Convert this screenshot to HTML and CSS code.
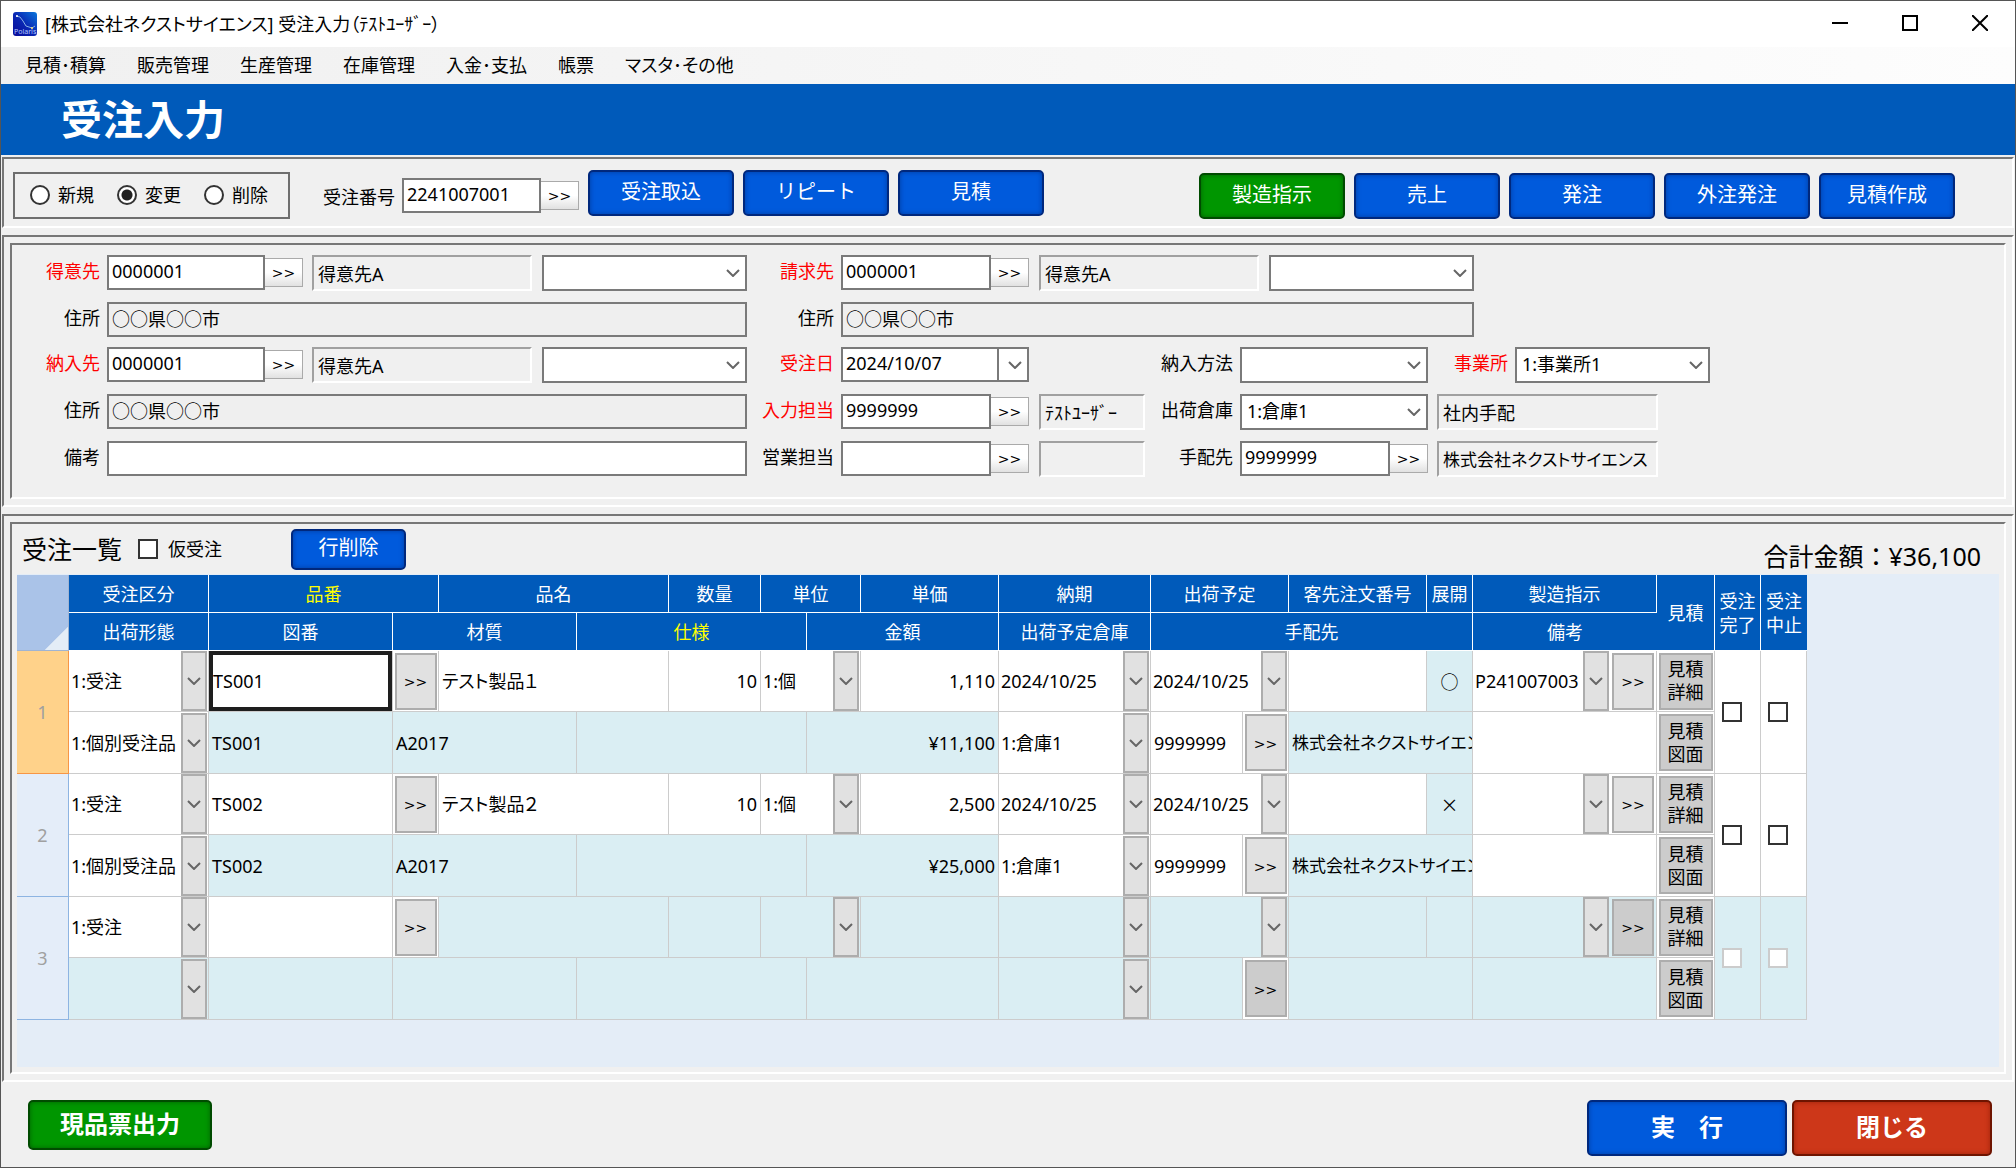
FILE: index.html
```html
<!DOCTYPE html>
<html lang="ja">
<head>
  <meta charset="UTF-8">
  <title>受注入力</title>
  <link rel="stylesheet" href="styles.css">
</head>
<body>
<div class="window">
  <header class="titlebar">
    <svg class="app-icon" viewBox="0 0 24 24">
      <defs>
        <linearGradient id="sky" x1="0" y1="1" x2="1" y2="0">
          <stop offset="0" stop-color="#0a0a96"/>
          <stop offset="0.5" stop-color="#0a28b4"/>
          <stop offset="1" stop-color="#0a78dc"/>
        </linearGradient>
      </defs>
      <rect width="24" height="24" rx="3" fill="url(#sky)"/>
      <path d="M3 4l4 1 3 4 3 5 6 2 3-2" fill="none" stroke="#8ab4e6" stroke-width="1"/>
      <circle cx="4" cy="4" r="1" fill="#fff"/>
      <circle cx="19" cy="16" r="1" fill="#ffe678"/>
      <text x="1" y="22" font-size="7" fill="#b4c8ff">Polaris</text>
    </svg>
    <span class="caption">[株式会社ネクストサイエンス] 受注入力（ﾃｽﾄﾕｰｻﾞｰ）</span>
    <div class="win-buttons">
      <button type="button" aria-label="最小化"><svg viewBox="0 0 16 16"><path d="M0 8h16"/></svg></button>
      <button type="button" aria-label="最大化"><svg viewBox="0 0 16 16"><path d="M1 1h14v14H1z"/></svg></button>
      <button type="button" aria-label="閉じる"><svg viewBox="0 0 16 16"><path d="M0 0l16 16M16 0L0 16"/></svg></button>
    </div>
  </header>

  <nav class="menu">
    <a href="#">見積･積算</a>
    <a href="#">販売管理</a>
    <a href="#">生産管理</a>
    <a href="#">在庫管理</a>
    <a href="#">入金･支払</a>
    <a href="#">帳票</a>
    <a href="#">マスタ･その他</a>
  </nav>

  <h1>受注入力</h1>

  <section class="toolbar sunken">
    <div class="modes">
      <label><input type="radio" name="mode">新規</label>
      <label><input type="radio" name="mode" checked>変更</label>
      <label><input type="radio" name="mode">削除</label>
    </div>
    <label class="no-label" for="order-no">受注番号</label>
    <div class="lookup order-no">
      <input type="text" id="order-no" value="2241007001"><button type="button">&gt;&gt;</button>
    </div>
    <div class="tools">
      <button type="button" class="btn">受注取込</button>
      <button type="button" class="btn">リピート</button>
      <button type="button" class="btn">見積</button>
    </div>
    <div class="actions">
      <button type="button" class="btn green">製造指示</button>
      <button type="button" class="btn">売上</button>
      <button type="button" class="btn">発注</button>
      <button type="button" class="btn">外注発注</button>
      <button type="button" class="btn narrow">見積作成</button>
    </div>
  </section>

  <section class="panel sunken">
    <form class="fields sunken">
      <!-- 得意先 / 請求先 -->
      <label class="c1 req" for="customer">得意先</label>
      <div class="lookup c2"><input type="text" id="customer" value="0000001"><button type="button">&gt;&gt;</button></div>
      <output class="c3">得意先A</output>
      <select class="c4" aria-label="得意先担当"><option></option></select>
      <label class="c5 req" for="billing">請求先</label>
      <div class="lookup c6"><input type="text" id="billing" value="0000001"><button type="button">&gt;&gt;</button></div>
      <div class="pair">
        <output>得意先A</output>
        <select aria-label="請求先担当"><option></option></select>
      </div>

      <!-- 住所 -->
      <label class="c1" for="addr1">住所</label>
      <input class="wide" type="text" id="addr1" value="○○県○○市" readonly>
      <label class="c5" for="addr2">住所</label>
      <input class="wide2" type="text" id="addr2" value="○○県○○市" readonly>

      <!-- 納入先 / 受注日 -->
      <label class="c1 req" for="deliver">納入先</label>
      <div class="lookup c2"><input type="text" id="deliver" value="0000001"><button type="button">&gt;&gt;</button></div>
      <output class="c3">得意先A</output>
      <select class="c4" aria-label="納入先担当"><option></option></select>
      <label class="c5 req" for="order-date">受注日</label>
      <div class="date c6"><input type="text" id="order-date" value="2024/10/07"><button type="button" aria-label="日付"></button></div>
      <label class="c8" for="method">納入方法</label>
      <select class="c9" id="method"><option></option></select>
      <label class="c10 req" for="office">事業所</label>
      <select class="c11" id="office"><option>1:事業所1</option></select>

      <!-- 住所 / 入力担当 -->
      <label class="c1" for="addr3">住所</label>
      <input class="wide" type="text" id="addr3" value="○○県○○市" readonly>
      <label class="c5 req" for="operator">入力担当</label>
      <div class="lookup c6"><input type="text" id="operator" value="9999999"><button type="button">&gt;&gt;</button></div>
      <output class="c7">ﾃｽﾄﾕｰｻﾞｰ</output>
      <label class="c8" for="warehouse">出荷倉庫</label>
      <select class="c9" id="warehouse"><option>1:倉庫1</option></select>
      <output class="vendor">社内手配</output>

      <!-- 備考 / 営業担当 -->
      <label class="c1" for="note">備考</label>
      <input class="wide" type="text" id="note">
      <label class="c5" for="sales">営業担当</label>
      <div class="lookup c6"><input type="text" id="sales"><button type="button">&gt;&gt;</button></div>
      <output class="c7"></output>
      <label class="c8" for="supplier">手配先</label>
      <div class="lookup c9"><input type="text" id="supplier" value="9999999"><button type="button">&gt;&gt;</button></div>
      <output class="vendor long">株式会社ネクストサイエンス</output>
    </form>
  </section>

  <section class="panel list sunken">
    <div class="list-inner sunken">
      <div class="list-head">
        <h2>受注一覧</h2>
        <label><input type="checkbox">仮受注</label>
        <button type="button" class="btn del">行削除</button>
        <p class="total">合計金額：¥36,100</p>
      </div>

      <div class="sheet">
      <table>
        <colgroup>
          <col class="w52"><col class="w140"><col class="w184"><col class="w46"><col class="w138">
          <col class="w92"><col class="w92"><col class="w46"><col class="w54"><col class="w138">
          <col class="w152"><col class="w92"><col class="w46"><col class="w138"><col class="w46">
          <col class="w184"><col class="w58"><col class="w46"><col class="w46">
        </colgroup>
        <thead>
          <tr>
            <th rowspan="2" class="corner"></th>
            <th>受注区分</th>
            <th colspan="2" class="key">品番</th>
            <th colspan="2">品名</th>
            <th>数量</th>
            <th colspan="2">単位</th>
            <th>単価</th>
            <th>納期</th>
            <th colspan="2">出荷予定</th>
            <th>客先注文番号</th>
            <th>展開</th>
            <th>製造指示</th>
            <th rowspan="2">見積</th>
            <th rowspan="2">受注<br>完了</th>
            <th rowspan="2">受注<br>中止</th>
          </tr>
          <tr>
            <th>出荷形態</th>
            <th>図番</th>
            <th colspan="2">材質</th>
            <th colspan="3" class="key">仕様</th>
            <th colspan="2">金額</th>
            <th>出荷予定倉庫</th>
            <th colspan="4">手配先</th>
            <th>備考</th>
          </tr>
        </thead>
        <tbody class="current">
          <tr>
            <th rowspan="2">1</th>
            <td class="cell"><select aria-label="受注区分"><option>1:受注</option></select></td>
            <td class="cell"><input class="active" type="text" aria-label="品番" value="TS001"></td>
            <td class="cell"><button type="button">&gt;&gt;</button></td>
            <td colspan="2">テスト製品１</td>
            <td class="num">10</td>
            <td class="cell" colspan="2"><select aria-label="単位"><option>1:個</option></select></td>
            <td class="num">1,110</td>
            <td class="cell"><select aria-label="納期"><option>2024/10/25</option></select></td>
            <td class="cell" colspan="2"><select aria-label="出荷予定"><option>2024/10/25</option></select></td>
            <td></td>
            <td class="ro mark">○</td>
            <td class="cell"><div class="combo"><select aria-label="製造指示"><option>P241007003</option></select><button type="button">&gt;&gt;</button></div></td>
            <td class="cell est"><button type="button">見積<br>詳細</button></td>
            <td class="chk" rowspan="2"><input type="checkbox" aria-label="受注完了"></td>
            <td class="chk" rowspan="2"><input type="checkbox" aria-label="受注中止"></td>
          </tr>
          <tr>
            <td class="cell"><select aria-label="出荷形態"><option>1:個別受注品</option></select></td>
            <td class="ro">TS001</td>
            <td class="ro" colspan="2">A2017</td>
            <td class="ro" colspan="3"></td>
            <td class="ro num" colspan="2">¥11,100</td>
            <td class="cell"><select aria-label="出荷予定倉庫"><option>1:倉庫1</option></select></td>
            <td>9999999</td>
            <td class="cell"><button type="button">&gt;&gt;</button></td>
            <td class="ro long" colspan="2">株式会社ネクストサイエンス</td>
            <td></td>
            <td class="cell est"><button type="button">見積<br>図面</button></td>
          </tr>
        </tbody>
        <tbody>
          <tr>
            <th rowspan="2">2</th>
            <td class="cell"><select aria-label="受注区分"><option>1:受注</option></select></td>
            <td>TS002</td>
            <td class="cell"><button type="button">&gt;&gt;</button></td>
            <td colspan="2">テスト製品２</td>
            <td class="num">10</td>
            <td class="cell" colspan="2"><select aria-label="単位"><option>1:個</option></select></td>
            <td class="num">2,500</td>
            <td class="cell"><select aria-label="納期"><option>2024/10/25</option></select></td>
            <td class="cell" colspan="2"><select aria-label="出荷予定"><option>2024/10/25</option></select></td>
            <td></td>
            <td class="ro mark">×</td>
            <td class="cell"><div class="combo"><select aria-label="製造指示"><option></option></select><button type="button">&gt;&gt;</button></div></td>
            <td class="cell est"><button type="button">見積<br>詳細</button></td>
            <td class="chk" rowspan="2"><input type="checkbox" aria-label="受注完了"></td>
            <td class="chk" rowspan="2"><input type="checkbox" aria-label="受注中止"></td>
          </tr>
          <tr>
            <td class="cell"><select aria-label="出荷形態"><option>1:個別受注品</option></select></td>
            <td class="ro">TS002</td>
            <td class="ro" colspan="2">A2017</td>
            <td class="ro" colspan="3"></td>
            <td class="ro num" colspan="2">¥25,000</td>
            <td class="cell"><select aria-label="出荷予定倉庫"><option>1:倉庫1</option></select></td>
            <td>9999999</td>
            <td class="cell"><button type="button">&gt;&gt;</button></td>
            <td class="ro long" colspan="2">株式会社ネクストサイエンス</td>
            <td></td>
            <td class="cell est"><button type="button">見積<br>図面</button></td>
          </tr>
        </tbody>
        <tbody>
          <tr>
            <th rowspan="2">3</th>
            <td class="cell"><select aria-label="受注区分"><option>1:受注</option></select></td>
            <td></td>
            <td class="cell"><button type="button">&gt;&gt;</button></td>
            <td class="ro" colspan="2"></td>
            <td class="ro"></td>
            <td class="cell ro" colspan="2"><select aria-label="単位"><option></option></select></td>
            <td class="ro"></td>
            <td class="cell ro"><select aria-label="納期"><option></option></select></td>
            <td class="cell ro" colspan="2"><select aria-label="出荷予定"><option></option></select></td>
            <td class="ro"></td>
            <td class="ro"></td>
            <td class="cell ro"><div class="combo"><select aria-label="製造指示"><option></option></select><button type="button" class="off">&gt;&gt;</button></div></td>
            <td class="cell est"><button type="button">見積<br>詳細</button></td>
            <td class="ro chk" rowspan="2"><input type="checkbox" aria-label="受注完了" disabled></td>
            <td class="ro chk" rowspan="2"><input type="checkbox" aria-label="受注中止" disabled></td>
          </tr>
          <tr>
            <td class="cell ro"><select aria-label="出荷形態"><option></option></select></td>
            <td class="ro"></td>
            <td class="ro" colspan="2"></td>
            <td class="ro" colspan="3"></td>
            <td class="ro" colspan="2"></td>
            <td class="cell ro"><select aria-label="出荷予定倉庫"><option></option></select></td>
            <td class="ro"></td>
            <td class="cell"><button type="button" class="off">&gt;&gt;</button></td>
            <td class="ro" colspan="2"></td>
            <td class="ro"></td>
            <td class="cell est"><button type="button">見積<br>図面</button></td>
          </tr>
        </tbody>
      </table>
      </div>
    </div>
  </section>

  <footer>
    <button type="button" class="btn green print">現品票出力</button>
    <button type="button" class="btn big">実　行</button>
    <button type="button" class="btn big red">閉じる</button>
  </footer>
</div>
</body>
</html>
```

FILE: styles.css
```css
* {
  box-sizing: border-box;
}
body {
  margin: 0;
  font-family: "Noto Sans", "Noto Sans CJK JP", sans-serif;
  font-size: 18px;
  line-height: 24px;
  color: #000;
  background: #f0f0f0;
}
input, select, button, output {
  font: inherit;
  color: inherit;
  margin: 0;
}
.window {
  min-height: 100vh;
  display: flex;
  flex-direction: column;
  border: 1px solid #555;
}
.sunken {
  border: 2px solid;
  border-color: #777 #fff #fff #777;
}

/* title bar and menu */
.titlebar {
  display: flex;
  align-items: center;
  height: 46px;
  padding-left: 12px;
  background: #fff;
}
.app-icon {
  width: 24px;
  height: 24px;
  margin-right: 8px;
}
.caption {
  font-feature-settings: "palt";
}
.win-buttons {
  margin-left: auto;
  display: flex;
}
.win-buttons button {
  width: 70px;
  height: 44px;
  border: 0;
  background: none;
}
.win-buttons svg {
  width: 16px;
  height: 16px;
  fill: none;
  stroke: #000;
  stroke-width: 2;
}
.menu {
  display: flex;
  align-items: center;
  gap: 31px;
  height: 37px;
  padding: 0 0 2px 24px;
  background: linear-gradient(to right, #f0f0f0, #fdfdfd);
  font-feature-settings: "palt";
}
.menu a {
  color: #000;
  text-decoration: none;
}
h1 {
  margin: 0;
  padding: 0 60px;
  font-size: 41px;
  line-height: 71px;
  font-weight: bold;
  color: #fff;
  background: #005aba;
}

/* buttons */
.btn {
  width: 146px;
  height: 46px;
  padding: 0 0 2px;
  font-size: 20px;
  color: #fff;
  background: #005adc;
  border: 2px solid #00287d;
  border-radius: 5px;
  box-shadow: inset 0 0 5px #003ca0;
}
.btn.narrow {
  width: 136px;
}
.btn.green {
  background: #009600;
  border-color: #004b00;
  box-shadow: inset 0 0 5px #006400;
}
.btn.red {
  background: #cd3719;
  border-color: #6e1400;
  box-shadow: inset 0 0 5px #9b230a;
}

/* toolbar */
.toolbar {
  display: flex;
  align-items: center;
  margin: 2px 1px 0;
  padding: 6px 57px 0 9px;
  height: 71px;
}
.modes {
  display: flex;
  align-items: center;
  gap: 23px;
  width: 277px;
  height: 47px;
  padding: 0 0 2px 15px;
  border: 2px solid #6e6e6e;
}
.modes label {
  display: flex;
  align-items: center;
  gap: 8px;
}
input[type=radio] {
  appearance: none;
  width: 20px;
  height: 20px;
  border: 2px solid #333;
  border-radius: 50%;
  background: #fff;
}
input[type=radio]:checked {
  background: radial-gradient(circle, #222 5px, #fff 6px);
}
input[type=checkbox] {
  appearance: none;
  display: block;
  width: 20px;
  height: 20px;
  border: 2px solid #333;
  background: #fff;
}
input[type=checkbox]:disabled {
  border-color: #ccc;
}
.no-label {
  margin: 2px 7px 0 33px;
}
.tools, .actions {
  display: flex;
  gap: 9px;
}
.tools {
  margin: 0 0 6px 9px;
}
.actions {
  margin-left: auto;
}

/* form controls */
input[type=text], .fields select {
  min-width: 0;
  height: 35px;
  padding: 0 3px 3px;
  border: 2px solid #7a7a7a;
  border-radius: 0;
  background: #fff;
}
input[readonly] {
  background: #efefef;
}
.lookup {
  display: flex;
  align-items: center;
}
.lookup input {
  flex: 1;
}
.lookup button {
  width: 38px;
  height: 29px;
  padding: 0;
  font-family: "DejaVu Sans", sans-serif;
  font-size: 14px;
  border: 1px solid #aaa;
  border-left: 0;
  background: linear-gradient(#fff 50%, #e1e1e1);
}
.order-no {
  width: 177px;
}
.date {
  display: flex;
}
.date input {
  flex: 1;
}
.date button {
  width: 32px;
  height: 35px;
  margin-left: -2px;
  border: 2px solid #7a7a7a;
}
.date button, select, .fields select {
  appearance: none;
  background: #fff url("data:image/svg+xml,%3Csvg xmlns='http://www.w3.org/2000/svg' width='14' height='8'%3E%3Cpath d='M1 1l6 6 6-6' fill='none' stroke='%23666' stroke-width='2'/%3E%3C/svg%3E") no-repeat right 5px center;
}
output {
  display: block;
  height: 36px;
  padding: 5px 4px;
  overflow: hidden;
  white-space: nowrap;
  border: 2px solid;
  border-color: #a0a0a0 #fff #fff #a0a0a0;
  font-feature-settings: "palt";
}
.panel {
  margin: 7px 1px 0;
  padding: 6px;
}
.fields {
  display: grid;
  grid-template-columns: 95px 196px 9px 220px 10px 205px 94px 188px 10px 106px 95px 188px 9px 78px 195px;
  grid-template-rows: 47px 45px 47px 47px 36px;
  align-items: start;
  padding: 10px 0 20px;
}
.fields label {
  padding: 4px 7px 0 0;
  text-align: right;
}
.fields select {
  width: 100%;
  height: 36px;
  padding: 0 5px 3px;
}
.req {
  color: #f00;
}
.c1 { grid-column: 1; }
.c2 { grid-column: 2; }
.c3 { grid-column: 4; }
.c4 { grid-column: 6; }
.c5 { grid-column: 7; }
.c6 { grid-column: 8; }
.c7 { grid-column: 10; }
.c8 { grid-column: 11; }
.c9 { grid-column: 12; }
.c10 { grid-column: 14; }
.c11 { grid-column: 15; }
.wide { grid-column: 2 / 7; }
.wide2 {
  grid-column: 8 / 13;
  width: 633px;
}
.pair {
  grid-column: 10 / 14;
  display: grid;
  grid-template-columns: 220px 205px;
  gap: 10px;
}
.vendor {
  grid-column: 14 / 16;
  width: 221px;
}
.long {
  font-size: 17px;
}

/* order list */
.list {
  flex: 1;
  display: flex;
}
.list-inner {
  flex: 1;
  display: flex;
  flex-direction: column;
  min-width: 0;
  padding: 0 5px 5px;
}
.list-head {
  display: flex;
  align-items: center;
  height: 50px;
  padding-left: 5px;
}
.list-head h2 {
  margin: 0 16px 0 0;
  font-size: 25px;
  font-weight: normal;
}
.list-head label {
  display: flex;
  align-items: center;
  gap: 10px;
}
.btn.del {
  width: 115px;
  height: 41px;
  margin-left: 69px;
}
.total {
  margin: 14px 18px 0 auto;
  font-size: 25px;
}
.sheet {
  flex: 1;
  padding-top: 1px;
  background: #e4edf7;
}
table {
  width: 1790px;
  table-layout: fixed;
  border-collapse: separate;
  border-spacing: 0;
}
.w46 { width: 46px; }
.w52 { width: 52px; }
.w54 { width: 54px; }
.w58 { width: 58px; }
.w92 { width: 92px; }
.w138 { width: 138px; }
.w140 { width: 140px; }
.w152 { width: 152px; }
.w184 { width: 184px; }
th, td {
  padding: 0;
  font-weight: normal;
}
thead th {
  height: 38px;
  color: #fff;
  background: #005aba;
  border-right: 1px solid #fff;
  border-bottom: 1px solid #fff;
}
thead th:last-child {
  border-right: 0;
}
thead th.key {
  color: #ff0;
}
thead th.corner {
  background: linear-gradient(135deg, #aac3e8 81%, #e4edf7 82%);
  border-color: #a0b4d2;
}
tbody th {
  color: #a0a0a0;
  background: #e4edf9;
  border-right: 1px solid #8db4e2;
  border-bottom: 1px solid #8db4e2;
}
.current th {
  background: #ffd28a;
  border-color: #f79646;
}
td {
  height: 61px;
  padding: 0 3px;
  overflow: hidden;
  white-space: nowrap;
  background: #fff;
  border-right: 1px solid #ccc;
  border-bottom: 1px solid #ccc;
  font-feature-settings: "palt";
}
tr:nth-child(even) td {
  height: 62px;
}
.ro {
  background: #daeef3;
}
.num {
  text-align: right;
}
.mark {
  text-align: center;
  font-family: "Noto Sans CJK JP", sans-serif;
  font-feature-settings: normal;
}
.cell {
  padding: 0;
}
td select {
  display: block;
  width: 100%;
  height: 60px;
  padding: 0 27px 0 2px;
  border: 0;
  border-radius: 0;
  background-color: transparent;
  background-image:
    url("data:image/svg+xml,%3Csvg xmlns='http://www.w3.org/2000/svg' width='14' height='8'%3E%3Cpath d='M1 1l6 6 6-6' fill='none' stroke='%23666' stroke-width='2'/%3E%3C/svg%3E"),
    linear-gradient(#e1e1e1, #e1e1e1),
    linear-gradient(#adadad, #adadad);
  background-position: right 7px center, right 3px center, right 1px center;
  background-size: 14px 8px, 22px 56px, 26px 60px;
}
td .active {
  display: block;
  width: 100%;
  height: 60px;
  padding: 0;
  border: 4px solid #1e1e1e;
}
td button {
  display: block;
  width: 42px;
  height: 57px;
  margin: 0 auto;
  padding: 2px 0 0;
  font-family: "DejaVu Sans", sans-serif;
  font-size: 14px;
  background: #e1e1e1;
  border: 2px solid #adadad;
}
.est button {
  width: 54px;
  padding: 0;
  font-family: inherit;
  font-size: 18px;
  line-height: 23px;
  background: #ccc;
}
td button.off {
  background: #ccc;
}
.combo {
  display: flex;
  align-items: center;
}
.combo select {
  width: 137px;
}
.chk {
  padding: 0 7px;
}

/* footer */
footer {
  display: flex;
  align-items: center;
  gap: 5px;
  padding: 18px 23px 11px 27px;
}
.btn.print {
  width: 184px;
  height: 50px;
  margin: 0 auto 6px 0;
}
.print, .big {
  font-size: 24px;
  font-weight: bold;
}
.big {
  width: 200px;
  height: 56px;
}
```
